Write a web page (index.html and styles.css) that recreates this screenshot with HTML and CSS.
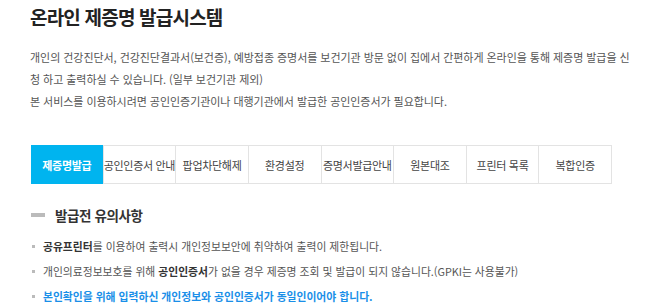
FILE: index.html
```html
<!DOCTYPE html>
<html lang="ko">
<head>
<meta charset="utf-8">
<link rel="stylesheet" href="styles.css">
</head>
<body>
<div class="page">
  <h1 class="title">온라인 제증명 발급시스템</h1>
  <div class="intro">
    <p>개인의 건강진단서, 건강진단결과서(보건증), 예방접종 증명서를 보건기관 방문 없이 집에서 간편하게 온라인을 통해 제증명 발급을 신청 하고 출력하실 수 있습니다. (일부 보건기관 제외)</p>
    <p>본 서비스를 이용하시려면 공인인증기관이나 대행기관에서 발급한 공인인증서가 필요합니다.</p>
  </div>
  <ul class="tabs">
    <li class="tab active">제증명발급</li>
    <li class="tab">공인인증서 안내</li>
    <li class="tab">팝업차단해제</li>
    <li class="tab">환경설정</li>
    <li class="tab">증명서발급안내</li>
    <li class="tab">원본대조</li>
    <li class="tab">프린터 목록</li>
    <li class="tab">복합인증</li>
  </ul>
  <h2 class="section"><span class="bar"></span>발급전 유의사항</h2>
  <ul class="notes">
    <li><b>공유프린터</b>를 이용하여 출력시 개인정보보안에 취약하여 출력이 제한됩니다.</li>
    <li>개인의료정보보호를 위해 <b>공인인증서</b>가 없을 경우 제증명 조회 및 발급이 되지 않습니다.(GPKI는 사용불가)</li>
    <li class="blue">본인확인을 위해 입력하신 개인정보와 공인인증서가 동일인이어야 합니다.</li>
  </ul>
</div>
</body>
</html>
```
FILE: styles.css
```css
* { box-sizing: border-box; }
html, body { margin: 0; padding: 0; background: #fff; }
body {
  font-family: "Noto Sans CJK KR", "Noto Sans", sans-serif;
  color: #555;
}
.page {
  padding: 2px 0 0 30px;
  width: 632px;
}
.title {
  margin: 0;
  font-size: 19px;
  font-weight: bold;
  color: #222;
  line-height: 30px;
  letter-spacing: -0.8px;
}
.intro {
  margin-top: 14px;
  font-size: 11px;
  line-height: 22px;
  color: #555;
  letter-spacing: -0.05px;
}
.intro p { margin: 0; }
.tabs {
  list-style: none;
  margin: 33px 0 0 1px;
  padding: 0;
  display: flex;
  width: 581px;
  border: 1px solid #e3e3e3;
}
.tab {
  flex: 1 1 0;
  height: 37px;
  display: flex;
  align-items: center;
  justify-content: center;
  font-size: 11px;
  color: #444;
  border-left: 1px solid #e3e3e3;
  white-space: nowrap;
  letter-spacing: -0.3px;
}
.tab:first-child { border-left: none; }
.tab.active {
  background: #00b4ef;
  color: #fff;
  font-weight: bold;
  margin: -1px 0 -1px -1px;
  height: 39px;
}
.section {
  margin: 21px 0 0 1px;
  display: flex;
  align-items: center;
  font-size: 13.5px;
  font-weight: bold;
  color: #333;
  line-height: 20px;
  letter-spacing: -0.4px;
}
.bar {
  display: inline-block;
  width: 14px;
  height: 4px;
  background: #bbb;
  margin-right: 10px;
}
.notes {
  list-style: none;
  margin: 9px 0 0 0;
  padding: 0;
  font-size: 10.8px;
  color: #555;
}
.notes li {
  position: relative;
  padding-left: 13px;
  line-height: 25px;
}
.notes li::before {
  content: "";
  position: absolute;
  left: 2px;
  top: 11px;
  width: 3px;
  height: 3px;
  background: #bbb;
}
.notes b { color: #333; }
.notes .blue { color: #1a8fe8; font-weight: bold; }
```
